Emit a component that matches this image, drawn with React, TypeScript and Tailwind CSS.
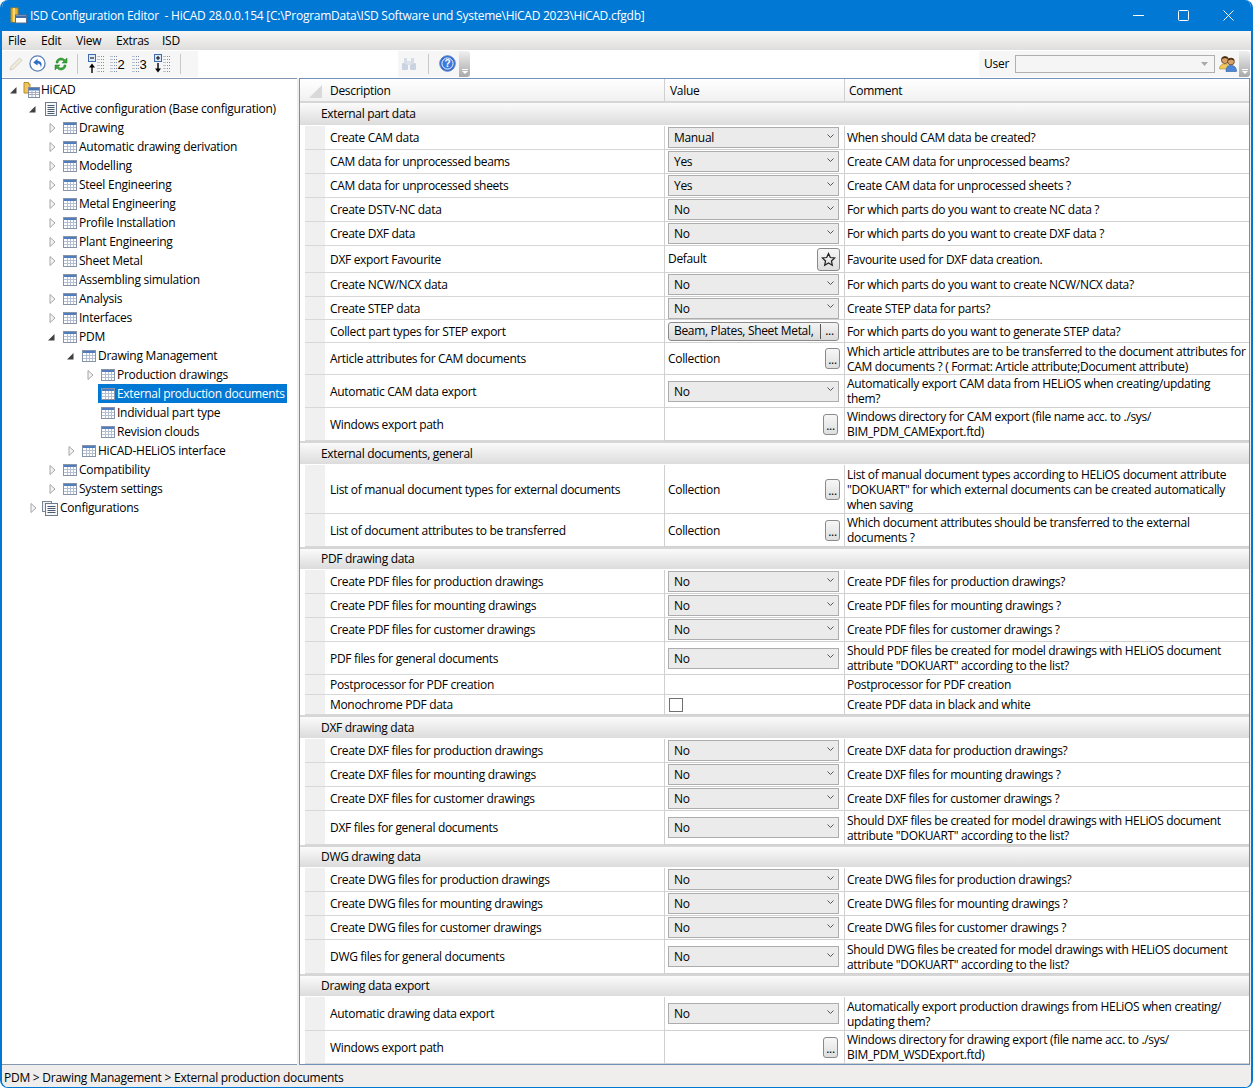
type Row = {
  h: string
  d: string
  c: string
  kind: 'combo' | 'text' | 'more' | 'pathbtn' | 'fav' | 'multi' | 'check' | 'empty'
  v?: string
}

type Group = { title: string; h: string; rows: Row[] }

const groups: Group[] = [
  {
    title: 'External part data',
    h: 'h-[24px]',
    rows: [
      { h: 'h-[24px]', d: 'Create CAM data', kind: 'combo', v: 'Manual', c: 'When should CAM data be created?' },
      { h: 'h-[24px]', d: 'CAM data for unprocessed beams', kind: 'combo', v: 'Yes', c: 'Create CAM data for unprocessed beams?' },
      { h: 'h-[24px]', d: 'CAM data for unprocessed sheets', kind: 'combo', v: 'Yes', c: 'Create CAM data for unprocessed sheets ?' },
      { h: 'h-[24px]', d: 'Create DSTV-NC data', kind: 'combo', v: 'No', c: 'For which parts do you want to create NC data ?' },
      { h: 'h-[24px]', d: 'Create DXF data', kind: 'combo', v: 'No', c: 'For which parts do you want to create DXF data ?' },
      { h: 'h-[27px]', d: 'DXF export Favourite', kind: 'fav', v: 'Default', c: 'Favourite used for DXF data creation.' },
      { h: 'h-[24px]', d: 'Create NCW/NCX data', kind: 'combo', v: 'No', c: 'For which parts do you want to create NCW/NCX data?' },
      { h: 'h-[23px]', d: 'Create STEP data', kind: 'combo', v: 'No', c: 'Create STEP data for parts?' },
      { h: 'h-[23px]', d: 'Collect part types for STEP export', kind: 'multi', v: 'Beam, Plates, Sheet Metal,', c: 'For which parts do you want to generate STEP data?' },
      { h: 'h-[32px]', d: 'Article attributes for CAM documents', kind: 'more', v: 'Collection', c: 'Which article attributes are to be transferred to the document attributes for\nCAM documents ? ( Format: Article attribute;Document attribute)' },
      { h: 'h-[33px]', d: 'Automatic CAM data export', kind: 'combo', v: 'No', c: 'Automatically export CAM data from HELiOS when creating/updating\nthem?' },
      { h: 'h-[33px]', d: 'Windows export path', kind: 'pathbtn', c: 'Windows directory for CAM export (file name acc. to ./sys/\nBIM_PDM_CAMExport.ftd)' },
    ],
  },
  {
    title: 'External documents, general',
    h: 'h-[23px]',
    rows: [
      { h: 'h-[49px]', d: 'List of manual document types for external documents', kind: 'more', v: 'Collection', c: 'List of manual document types according to HELiOS document attribute\n"DOKUART" for which external documents can be created automatically\nwhen saving' },
      { h: 'h-[33px]', d: 'List of document attributes to be transferred', kind: 'more', v: 'Collection', c: 'Which document attributes should be transferred to the external\ndocuments ?' },
    ],
  },
  {
    title: 'PDF drawing data',
    h: 'h-[22px]',
    rows: [
      { h: 'h-[24px]', d: 'Create PDF files for production drawings', kind: 'combo', v: 'No', c: 'Create PDF files for production drawings?' },
      { h: 'h-[24px]', d: 'Create PDF files for mounting drawings', kind: 'combo', v: 'No', c: 'Create PDF files for mounting drawings ?' },
      { h: 'h-[24px]', d: 'Create PDF files for customer drawings', kind: 'combo', v: 'No', c: 'Create PDF files for customer drawings ?' },
      { h: 'h-[33px]', d: 'PDF files for general documents', kind: 'combo', v: 'No', c: 'Should PDF files be created for model drawings with HELiOS document\nattribute "DOKUART" according to the list?' },
      { h: 'h-[20px]', d: 'Postprocessor for PDF creation', kind: 'empty', c: 'Postprocessor for PDF creation' },
      { h: 'h-[20px]', d: 'Monochrome PDF data', kind: 'check', c: 'Create PDF data in black and white' },
    ],
  },
  {
    title: 'DXF drawing data',
    h: 'h-[23px]',
    rows: [
      { h: 'h-[24px]', d: 'Create DXF files for production drawings', kind: 'combo', v: 'No', c: 'Create DXF data for production drawings?' },
      { h: 'h-[24px]', d: 'Create DXF files for mounting drawings', kind: 'combo', v: 'No', c: 'Create DXF files for mounting drawings ?' },
      { h: 'h-[24px]', d: 'Create DXF files for customer drawings', kind: 'combo', v: 'No', c: 'Create DXF files for customer drawings ?' },
      { h: 'h-[34px]', d: 'DXF files for general documents', kind: 'combo', v: 'No', c: 'Should DXF files be created for model drawings with HELiOS document\nattribute "DOKUART" according to the list?' },
    ],
  },
  {
    title: 'DWG drawing data',
    h: 'h-[22px]',
    rows: [
      { h: 'h-[24px]', d: 'Create DWG files for production drawings', kind: 'combo', v: 'No', c: 'Create DWG files for production drawings?' },
      { h: 'h-[24px]', d: 'Create DWG files for mounting drawings', kind: 'combo', v: 'No', c: 'Create DWG files for mounting drawings ?' },
      { h: 'h-[24px]', d: 'Create DWG files for customer drawings', kind: 'combo', v: 'No', c: 'Create DWG files for customer drawings ?' },
      { h: 'h-[34px]', d: 'DWG files for general documents', kind: 'combo', v: 'No', c: 'Should DWG files be created for model drawings with HELiOS document\nattribute "DOKUART" according to the list?' },
    ],
  },
  {
    title: 'Drawing data export',
    h: 'h-[22px]',
    rows: [
      { h: 'h-[34px]', d: 'Automatic drawing data export', kind: 'combo', v: 'No', c: 'Automatically export production drawings from HELiOS when creating/\nupdating them?' },
      { h: 'h-[33px]', d: 'Windows export path', kind: 'pathbtn', c: 'Windows directory for drawing export (file name acc. to ./sys/\nBIM_PDM_WSDExport.ftd)' },
    ],
  },
]

type TreeItem = {
  label: string
  depth: number
  arrow?: 'open' | 'closed'
  icon?: 'root' | 'list' | 'lists' | 'grid'
  selected?: boolean
}

const tree: TreeItem[] = [
  { label: 'HiCAD', depth: 0, arrow: 'open', icon: 'root' },
  { label: 'Active configuration (Base configuration)', depth: 1, arrow: 'open', icon: 'list' },
  { label: 'Drawing', depth: 2, arrow: 'closed' },
  { label: 'Automatic drawing derivation', depth: 2, arrow: 'closed' },
  { label: 'Modelling', depth: 2, arrow: 'closed' },
  { label: 'Steel Engineering', depth: 2, arrow: 'closed' },
  { label: 'Metal Engineering', depth: 2, arrow: 'closed' },
  { label: 'Profile Installation', depth: 2, arrow: 'closed' },
  { label: 'Plant Engineering', depth: 2, arrow: 'closed' },
  { label: 'Sheet Metal', depth: 2, arrow: 'closed' },
  { label: 'Assembling simulation', depth: 2 },
  { label: 'Analysis', depth: 2, arrow: 'closed' },
  { label: 'Interfaces', depth: 2, arrow: 'closed' },
  { label: 'PDM', depth: 2, arrow: 'open' },
  { label: 'Drawing Management', depth: 3, arrow: 'open' },
  { label: 'Production drawings', depth: 4, arrow: 'closed' },
  { label: 'External production documents', depth: 4, selected: true },
  { label: 'Individual part type', depth: 4 },
  { label: 'Revision clouds', depth: 4 },
  { label: 'HiCAD-HELiOS interface', depth: 3, arrow: 'closed' },
  { label: 'Compatibility', depth: 2, arrow: 'closed' },
  { label: 'System settings', depth: 2, arrow: 'closed' },
  { label: 'Configurations', depth: 1, arrow: 'closed', icon: 'lists' },
]

const depthPad = ['pl-[5px]', 'pl-[24px]', 'pl-[43px]', 'pl-[62px]', 'pl-[81px]']

function Arrow({ type }: { type?: 'open' | 'closed' }) {
  if (!type) return <span className="w-[12px] shrink-0" />
  return (
    <svg width="12" height="12" viewBox="0 0 12 12" className="shrink-0">
      {type === 'open' ? (
        <path d="M9.5 3 L9.5 9.5 L3 9.5 Z" fill="#404040" />
      ) : (
        <path d="M5 1.5 L10 6 L5 10.5 Z" fill="#f4f4f4" stroke="#a6a6a6" />
      )}
    </svg>
  )
}

function GridIcon() {
  return (
    <svg width="14" height="14" viewBox="0 0 14 14" className="shrink-0">
      <rect x="0.5" y="1.5" width="13" height="11" fill="#fff" stroke="#8793a8" />
      <rect x="1" y="2" width="12" height="2" fill="#4f7dbd" />
      <path d="M1 6.5H13M1 9.5H13M4.5 4V12M7.5 4V12M10.5 4V12" stroke="#b4c0d2" strokeWidth="1" />
    </svg>
  )
}

function ListIcon() {
  return (
    <svg width="14" height="14" viewBox="0 0 14 14" className="shrink-0">
      <rect x="1.5" y="0.5" width="11" height="13" fill="#f6f7fa" stroke="#6d7a8c" />
      <path d="M3.5 3.5H10.5M3.5 5.5H10.5M3.5 7.5H10.5M3.5 9.5H10.5M3.5 11.5H10.5" stroke="#4c5a6e" />
    </svg>
  )
}

function ListsIcon() {
  return (
    <svg width="16" height="16" viewBox="0 0 16 16" className="shrink-0 -ml-[2px]">
      <rect x="0.5" y="1.5" width="9" height="10" fill="#eef0f4" stroke="#7d8796" />
      <rect x="3.5" y="3.5" width="12" height="12" fill="#f6f7fa" stroke="#6d7a8c" />
      <path d="M5.5 6.5H13.5M5.5 8.5H13.5M5.5 10.5H13.5M5.5 12.5H13.5" stroke="#4c5a6e" />
    </svg>
  )
}

function RootIcon() {
  return (
    <svg width="17" height="17" viewBox="0 0 17 17" className="shrink-0 -ml-[2px] -mr-px">
      <path d="M1 1.5H5.5V3H7V12H1Z" fill="#f2c55c" stroke="#b58a2a" />
      <rect x="5.5" y="6.5" width="11" height="10" fill="#fff" stroke="#7f8da3" />
      <rect x="6" y="7" width="10" height="2.5" fill="#4a78b8" />
      <path d="M6 11.5H16M6 13.5H16M9 10V16M12.5 10V16" stroke="#a2aec0" />
    </svg>
  )
}

function AppLogo() {
  return (
    <svg width="17" height="17" viewBox="0 0 17 17" className="shrink-0">
      <rect x="1" y="1" width="7" height="14" fill="#e9b230" stroke="#b07f17" />
      <rect x="3" y="1" width="2" height="14" fill="#f8d877" />
      <rect x="5.5" y="8" width="11" height="8" fill="#fff" stroke="#566c8c" />
      <rect x="6" y="8.5" width="10" height="2.5" fill="#3f6cab" />
    </svg>
  )
}

function TreeLevelIcon({ level }: { level: 'up' | '2' | '3' | 'down' }) {
  const boxed = level === 'up' || level === 'down'
  const x = boxed ? 'M9.5 ' : 'M0.5 '
  const dashes = [2.5, 5.5, 8.5, 11.5, 14.5, 17.5]
    .map((y) => `${x}${y}h2.5m1 0h3`)
    .join('')
  return (
    <svg width="17" height="20" viewBox="0 0 17 20" className="shrink-0">
      <path d={dashes} stroke="#7d8ea8" strokeDasharray="1 1" />
      {level === 'up' && (
        <>
          <rect x="0.5" y="0.5" width="7" height="7" fill="#dbe8f8" stroke="#3f6cab" />
          <path d="M2 4H6" stroke="#000" />
          <path d="M4 19V12" stroke="#000" strokeWidth="1.4" />
          <path d="M1 13.5L4 9.5L7 13.5Z" fill="#000" />
        </>
      )}
      {level === 'down' && (
        <>
          <rect x="0.5" y="0.5" width="7" height="7" fill="#dbe8f8" stroke="#3f6cab" />
          <path d="M2 4H6M4 2V6" stroke="#000" />
          <path d="M4 9V16" stroke="#000" strokeWidth="1.4" />
          <path d="M1 14.5L4 18.5L7 14.5Z" fill="#000" />
        </>
      )}
      {!boxed && (
        <text x="7.5" y="15" fontSize="13" letterSpacing="0" fill="#000" fontFamily="Liberation Sans, sans-serif">
          {level}
        </text>
      )}
    </svg>
  )
}

function Gripper() {
  return (
    <div className="w-[11px] h-[26px] shrink-0 rounded-r-[3px] bg-gradient-to-b from-[#f0f0f0] to-[#a9a9a9] flex flex-col items-center justify-end pb-[3px]">
      <div className="w-[6px] h-px bg-white mb-px" />
      <svg width="6" height="3" viewBox="0 0 6 3"><path d="M0 0H6L3 3Z" fill="#fff" /></svg>
    </div>
  )
}

function ToolbarIcons() {
  return (
    <div className="flex items-center h-[26px] w-[196px] pl-[6px] bg-[#f7f6f7] rounded-l-[3px] shrink-0">
      <svg width="16" height="16" viewBox="0 0 16 16" className="shrink-0">
        <path d="M2 14L3 10.5L11.5 2L14 4.5L5.5 13Z" fill="#efe9d8" stroke="#d4d0c8" />
      </svg>
      <svg width="17" height="17" viewBox="0 0 18 18" className="shrink-0 ml-[5px]">
        <circle cx="9" cy="9" r="8" fill="#fff" stroke="#5a7fb5" strokeWidth="1.4" />
        <path d="M9 4L4.5 8L9 11V9C11 9 12.5 10 12.5 13.5C14.5 9.5 13 6.5 9 6.2Z" fill="#2f6fc4" />
      </svg>
      <svg width="14" height="16" viewBox="0 0 14 16" className="shrink-0 ml-[8px]">
        <path d="M2 7C2 3.5 5 2 7 2C9 2 10 3 11 4L13 2V7H8L10 5.3C9 4.4 8 4 7 4C5.5 4 4 5.2 4 7Z" fill="#3aa53a" stroke="#1f7a1f" strokeWidth="0.5" />
        <path d="M12 9C12 12.5 9 14 7 14C5 14 4 13 3 12L1 14V9H6L4 10.7C5 11.6 6 12 7 12C8.5 12 10 10.8 10 9Z" fill="#3aa53a" stroke="#1f7a1f" strokeWidth="0.5" />
      </svg>
      <div className="w-px h-[20px] bg-[#c9c9c9] ml-[9px] shrink-0" />
      <div className="ml-[10px] flex items-center gap-[5px]">
        <TreeLevelIcon level="up" />
        <TreeLevelIcon level="2" />
        <TreeLevelIcon level="3" />
        <TreeLevelIcon level="down" />
      </div>
      <div className="w-px h-[20px] bg-[#c9c9c9] ml-[9px] shrink-0" />
    </div>
  )
}

function UsersIcon() {
  return (
    <svg width="18" height="17" viewBox="0 0 18 17" className="shrink-0">
      <circle cx="6" cy="5" r="3.6" fill="#d9a066" stroke="#5b3a1a" strokeWidth="0.8" />
      <path d="M2.5 4C3 1 9 1 9.5 4L6 3Z" fill="#3a2410" />
      <path d="M0.5 14C0.5 10 3 9 6 9C9 9 10 10.5 10 14Z" fill="#f0c85e" stroke="#b08a2c" strokeWidth="0.6" />
      <circle cx="12" cy="6.5" r="3.4" fill="#d9a066" stroke="#5b3a1a" strokeWidth="0.8" />
      <path d="M8.8 5.5C9.2 2.6 14.8 2.6 15.2 5.5L12 4.5Z" fill="#3a2410" />
      <path d="M7 16.5C7 12 9 10.5 12 10.5C15 10.5 17.5 12 17.5 16.5Z" fill="#4a86d8" stroke="#2b5da8" strokeWidth="0.6" />
    </svg>
  )
}

function Combo({ value }: { value?: string }) {
  return (
    <div className="h-[21px] w-[171px] ml-[3px] flex items-center justify-between pl-[5px] pr-[4px] bg-[#ebebeb] border border-[#adadad]">
      <span className="leading-none pt-px">{value}</span>
      <svg width="7" height="5" viewBox="0 0 7 5" className="mb-[3px]">
        <path d="M0.5 0.5L3.5 3.5L6.5 0.5" fill="none" stroke="#555" />
      </svg>
    </div>
  )
}

function DotsButton() {
  return (
    <div className="w-[15px] h-[21px] rounded-[3px] border border-[#8a8a8a] bg-gradient-to-b from-[#f7f7f7] to-[#dedede] flex items-end justify-center leading-[16px] shrink-0">
      ...
    </div>
  )
}

function ValueCell({ row }: { row: Row }) {
  switch (row.kind) {
    case 'combo':
      return <Combo value={row.v} />
    case 'fav':
      return (
        <div className="flex items-center justify-between pl-[3px] pr-[4px]">
          <span>{row.v}</span>
          <div className="w-[23px] h-[23px] rounded-[3px] border border-[#8a8a8a] bg-gradient-to-b from-[#f7f7f7] to-[#dedede] flex items-center justify-center">
            <svg width="15" height="15" viewBox="0 0 24 24" fill="none" stroke="#222" strokeWidth="2">
              <path d="M12 2.5l2.9 6.3 6.9.8-5.1 4.7 1.4 6.8-6.1-3.4-6.1 3.4 1.4-6.8L2.2 9.6l6.9-.8z" />
            </svg>
          </div>
        </div>
      )
    case 'multi':
      return (
        <div className="h-[19px] w-[171px] ml-[3px] rounded-[3px] border border-[#8a8a8a] bg-gradient-to-b from-[#f4f4f4] to-[#d9d9d9] flex items-center">
          <span className="w-[151px] pl-[5px] whitespace-nowrap overflow-hidden">{row.v}</span>
          <span className="w-px h-[15px] bg-[#555]" />
          <span className="flex-1 text-center leading-[14px] self-start mt-px">...</span>
        </div>
      )
    case 'more':
      return (
        <div className="flex items-center justify-between pl-[3px] pr-[4px]">
          <span className="pt-px">{row.v}</span>
          <DotsButton />
        </div>
      )
    case 'pathbtn':
      return (
        <div className="flex items-center justify-end pr-[6px]">
          <DotsButton />
        </div>
      )
    case 'check':
      return <div className="w-[14px] h-[14px] ml-[4px] border border-[#707070] bg-white" />
    default:
      return null
  }
}

function GridRow({ row }: { row: Row }) {
  return (
    <div className={`${row.h} flex pl-[5px] shrink-0`}>
      <div className="w-[20px] bg-[#f0f0f0] border-b border-[#d8d8d8] shrink-0" />
      <div className="w-[339px] pl-[5px] pt-px flex items-center border-b border-[#d8d8d8] shrink-0 whitespace-nowrap">{row.d}</div>
      <div className="w-[180px] border-l border-b border-[#d0d0d0] flex flex-col justify-center shrink-0">
        <ValueCell row={row} />
      </div>
      <div className="flex-1 pl-[2px] border-l border-b border-[#d0d0d0] flex items-center leading-[15px] whitespace-pre">{row.c}</div>
    </div>
  )
}

export default function App() {
  return (
    <div className="w-[1253px] h-[1088px] flex flex-col overflow-hidden rounded-[8px] border-x-2 border-b border-[#0078d4] bg-white text-[#000] text-[12px] font-['Open_Sans',sans-serif] tracking-[-0.25px]">
      {/* TITLE BAR */}
      <div className="h-[31px] bg-[#0078d4] flex items-center text-white shrink-0 pl-[8px]">
        <AppLogo />
        <span className="ml-[3px] whitespace-pre">ISD Configuration Editor  - HiCAD 28.0.0.154 [C:\ProgramData\ISD Software und Systeme\HiCAD 2023\HiCAD.cfgdb]</span>
        <div className="ml-auto flex items-center pr-[17px] gap-[34px]">
          <svg width="11" height="11" viewBox="0 0 11 11"><path d="M0 5.5H11" stroke="#fff" /></svg>
          <svg width="11" height="11" viewBox="0 0 11 11"><rect x="0.5" y="0.5" width="10" height="10" rx="1" fill="none" stroke="#fff" /></svg>
          <svg width="11" height="11" viewBox="0 0 11 11"><path d="M0.5 0.5L10.5 10.5M10.5 0.5L0.5 10.5" stroke="#fff" /></svg>
        </div>
      </div>

      {/* MENU */}
      <div className="h-[19px] shrink-0 flex items-center pl-[6px] bg-gradient-to-b from-[#f7f7f7] to-[#dfdedc]">
        <span className="w-[33px]">File</span>
        <span className="w-[35px]">Edit</span>
        <span className="w-[40px]">View</span>
        <span className="w-[46px]">Extras</span>
        <span>ISD</span>
      </div>

      {/* TOOLBAR */}
      <div className="h-[28px] shrink-0 flex items-center pb-px">
        <ToolbarIcons />
        <div className="w-[200px] h-[26px] bg-white shrink-0" />
        <div className="flex items-center h-[26px] w-[61px] bg-[#f7f6f7] shrink-0">
          <svg width="16" height="14" viewBox="0 0 16 14" className="shrink-0 ml-[3px]">
            <rect x="1" y="6" width="6" height="7" rx="1" fill="#c9d3e2" />
            <rect x="9" y="6" width="6" height="7" rx="1" fill="#c9d3e2" />
            <rect x="3" y="1" width="3" height="6" fill="#d6dde8" />
            <rect x="10" y="1" width="3" height="6" fill="#d6dde8" />
            <rect x="6" y="4" width="4" height="4" fill="#dfe4ec" />
          </svg>
          <div className="w-px h-[20px] bg-[#c9c9c9] ml-[11px] shrink-0" />
          <svg width="17" height="17" viewBox="0 0 17 17" className="shrink-0 ml-[10px]">
            <circle cx="8.5" cy="8.5" r="7.8" fill="#2a67d0" stroke="#5f86c4" />
            <circle cx="8.5" cy="8.5" r="5.6" fill="#3b7be0" stroke="#fff" strokeWidth="1" />
            <text x="8.5" y="12" textAnchor="middle" fontSize="10" fontWeight="700" fill="#fff" fontFamily="Liberation Sans, sans-serif">?</text>
          </svg>
        </div>
        <Gripper />
        <div className="w-[509px] shrink-0" />
        <div className="flex items-center h-[26px] flex-1 pr-[1px]">
          <div className="flex-1 h-full bg-[#f7f6f7] rounded-l-[3px] flex items-center pl-[5px]">
            <span className="w-[31px]">User</span>
            <div className="w-[200px] h-[18px] bg-[#f5f5f5] border border-[#b0b0b0] flex items-center justify-end pr-[6px]">
              <svg width="7" height="4" viewBox="0 0 7 4"><path d="M0 0H7L3.5 4Z" fill="#a8a8a8" /></svg>
            </div>
            <span className="ml-[4px]"><UsersIcon /></span>
          </div>
          <Gripper />
        </div>
      </div>

      {/* MAIN */}
      <div className="h-[987px] shrink-0 flex bg-[#f0eded]">
        <div className="w-[295px] shrink-0 bg-white border-t border-b border-[#8497b0] pt-[1px] overflow-hidden">
          {tree.map((item) => (
            <div key={item.label} className={`h-[19px] flex items-center ${depthPad[item.depth]}`}>
              <Arrow type={item.arrow} />
              <div className={`ml-[3px] pl-[3px] pr-[2px] h-[19px] flex items-center ${item.selected ? 'bg-[#0078d4] text-white tracking-[-0.32px]' : ''}`}>
                {item.icon === 'root' ? <RootIcon /> : item.icon === 'list' ? <ListIcon /> : item.icon === 'lists' ? <ListsIcon /> : <GridIcon />}
                <span className="whitespace-nowrap ml-[2px] h-[19px] leading-[20px]">{item.label}</span>
              </div>
            </div>
          ))}
        </div>
        <div className="w-[2px] shrink-0" />
        <div className="flex-1 min-w-0 bg-white border border-[#7191bb] mr-[1px] flex flex-col overflow-hidden tracking-[-0.32px]">
          {/* HEADER */}
          <div className="h-[22px] shrink-0 flex bg-gradient-to-b from-[#ffffff] to-[#f1f1f1]">
            <div className="w-[25px] pl-[8px] pt-[5px] shrink-0">
              <svg width="15" height="15" viewBox="0 0 15 15"><path d="M14 1V14H1Z" fill="#d9d9d9" /></svg>
            </div>
            <div className="w-[339px] pl-[5px] pt-px flex items-center shrink-0">Description</div>
            <div className="w-[180px] pl-[5px] pt-px border-l border-[#d0d0d0] flex items-center shrink-0">Value</div>
            <div className="flex-1 pl-[4px] pt-px border-l border-[#d0d0d0] flex items-center">Comment</div>
          </div>
          {/* GROUPS */}
          {groups.map((group) => (
            <div key={group.title} className="flex flex-col shrink-0">
              <div className={`${group.h} shrink-0 border-t-2 border-[#d6d6d6] bg-gradient-to-b from-[#fbfbfb] to-[#dcdcdc] flex items-center pl-[21px]`}>
                {group.title}
              </div>
              <div className="h-px shrink-0" />
              {group.rows.map((row) => (
                <GridRow key={row.d + row.c} row={row} />
              ))}
            </div>
          ))}
        </div>
      </div>

      {/* STATUS */}
      <div className="flex-1 flex items-center pl-[2px] pt-[3px] bg-[#f0eded]">PDM &gt; Drawing Management &gt; External production documents</div>
    </div>
  )
}
